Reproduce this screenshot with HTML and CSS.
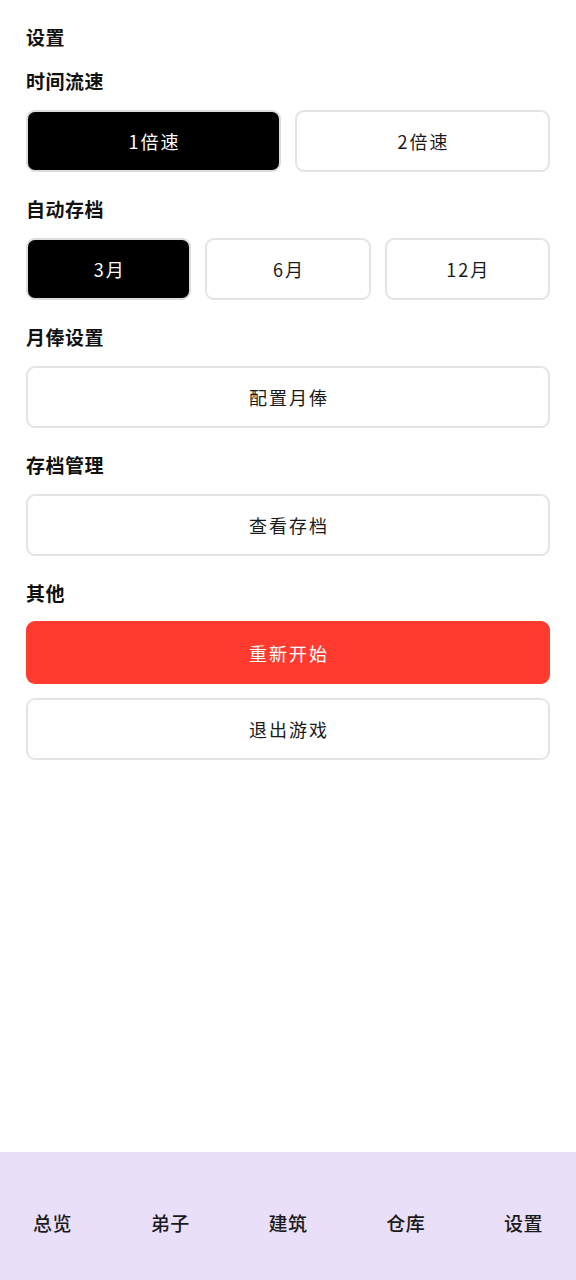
FILE: index.html
```html
<!DOCTYPE html>
<html lang="zh-CN">
<head>
<meta charset="utf-8">
<title>设置</title>
<link rel="stylesheet" href="styles.css">
</head>
<body>
<div class="app">
  <main class="content">
    <h1 class="title">设置</h1>

    <section class="section">
      <h2 class="heading">时间流速</h2>
      <div class="row">
        <button class="btn active">1倍速</button>
        <button class="btn">2倍速</button>
      </div>
    </section>

    <section class="section">
      <h2 class="heading">自动存档</h2>
      <div class="row">
        <button class="btn active">3月</button>
        <button class="btn">6月</button>
        <button class="btn">12月</button>
      </div>
    </section>

    <section class="section">
      <h2 class="heading">月俸设置</h2>
      <div class="row">
        <button class="btn">配置月俸</button>
      </div>
    </section>

    <section class="section">
      <h2 class="heading">存档管理</h2>
      <div class="row">
        <button class="btn">查看存档</button>
      </div>
    </section>

    <section class="section">
      <h2 class="heading">其他</h2>
      <div class="stack">
        <button class="btn danger">重新开始</button>
        <button class="btn">退出游戏</button>
      </div>
    </section>
  </main>

  <nav class="nav">
    <span class="nav-item">总览</span>
    <span class="nav-item">弟子</span>
    <span class="nav-item">建筑</span>
    <span class="nav-item">仓库</span>
    <span class="nav-item">设置</span>
  </nav>
</div>
</body>
</html>
```

FILE: styles.css
```css
* { box-sizing: border-box; }
html, body {
  margin: 0;
  padding: 0;
  background: #ffffff;
}
body {
  font-family: "Noto Sans CJK SC", "Noto Sans", sans-serif;
  color: #111111;
}
.app {
  width: 576px;
  height: 1280px;
  display: flex;
  flex-direction: column;
}
.content {
  flex: 1;
  padding: 25px 26px 0 26px;
}
.title {
  margin: 0;
  font-size: 19px;
  line-height: 24px;
  font-weight: 700;
  letter-spacing: 0.5px;
}
.section {
  margin-top: 20px;
}
.section + .section {
  margin-top: 25px;
}
.heading {
  margin: 0 0 17px 0;
  font-size: 19px;
  line-height: 24px;
  font-weight: 700;
  letter-spacing: 0.5px;
}
.row {
  display: flex;
  gap: 14px;
}
.stack {
  display: flex;
  flex-direction: column;
  gap: 14px;
}
.btn {
  flex: 1;
  height: 62px;
  border: 2px solid #e4e4e4;
  border-radius: 9px;
  background: #ffffff;
  color: #1a1a1a;
  font-family: "Noto Sans CJK SC", "Noto Sans", sans-serif;
  font-size: 18px;
  font-weight: 400;
  letter-spacing: 2px;
  padding: 0 0 0 2px;
}
.btn.active {
  background: #000000;
  color: #ffffff;
  border-color: #dcdcdc;
}
.btn.danger {
  background: #ff3b30;
  color: #ffffff;
  border: none;
  height: 63px;
  margin-top: -1px;
}
.stack .btn {
  flex: none;
}
.nav {
  height: 128px;
  background: #e9dff9;
  display: flex;
  align-items: center;
  justify-content: space-between;
  padding: 12px 33px 0 33px;
}
.nav-item {
  font-size: 19px;
  font-weight: 500;
  color: #1a1a1a;
  letter-spacing: 0.5px;
}
```
